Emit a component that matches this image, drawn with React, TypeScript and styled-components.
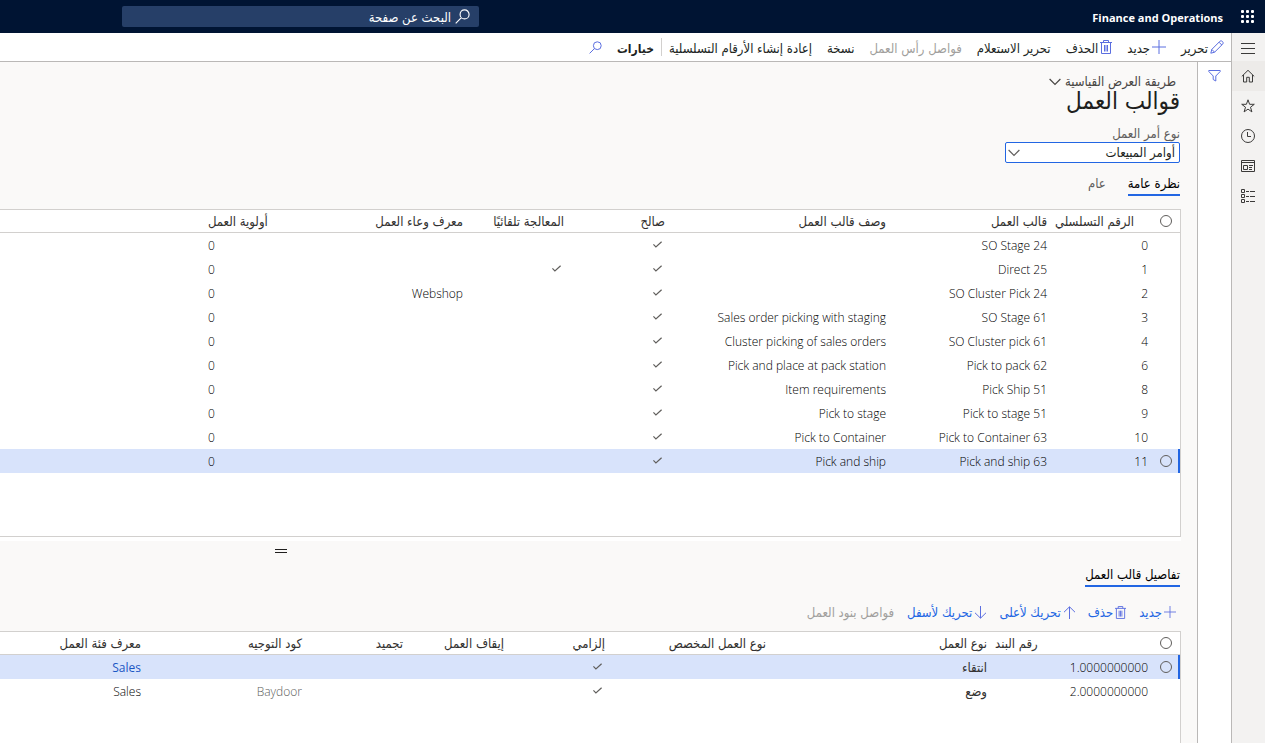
import React from 'react';
import styled, { createGlobalStyle, css } from 'styled-components';

const color = {
  navy: '#001433',
  search: '#263f68',
  blue: '#2266e3',
  icon: '#5b6ee0',
  ink: '#201f1e',
  text: '#323130',
  muted: '#605e5c',
  disabled: '#a19f9d',
  line: '#d2d0ce',
  strong: '#bab8b7',
  page: '#faf9f8',
  rail: '#f3f2f1',
  selected: '#d8e3fb',
};

const arabic = '"DejaVu Sans Condensed", "DejaVu Sans", sans-serif';
const latin = '"Open Sans", "DejaVu Sans Condensed", sans-serif';

const GlobalStyle = createGlobalStyle`
  *, *::before, *::after { box-sizing: border-box; }
  body {
    margin: 0;
    font-family: ${arabic};
    font-size: 13px;
    line-height: 20px;
    color: ${color.text};
    background: ${color.page};
  }
  button, input, select { font: inherit; color: inherit; margin: 0; }
`;

const Page = styled.div`
  min-height: 100vh;
  display: flex;
  flex-direction: column;
`;

const Header = styled.header`
  display: flex;
  align-items: center;
  height: 33px;
  padding-inline: 10px 122px;
  background: ${color.navy};
  color: #fff;
`;

const PlainButton = styled.button`
  display: flex;
  align-items: center;
  justify-content: center;
  padding: 0;
  border: 0;
  background: none;
  cursor: pointer;
`;

const Brand = styled.a`
  flex: 1;
  margin-inline-start: 17px;
  padding-top: 2px;
  font-family: ${latin};
  font-size: 11px;
  font-weight: 700;
  color: #fff;
  text-decoration: none;
`;

const SearchBox = styled.label`
  display: flex;
  align-items: center;
  gap: 4px;
  width: 357px;
  height: 21px;
  padding-inline: 9px;
  border-radius: 2px;
  background: ${color.search};
`;

const SearchInput = styled.input`
  flex: 1;
  min-width: 0;
  padding: 2px 0 0;
  border: 0;
  outline: 0;
  background: none;
  &::placeholder { color: #fff; opacity: 1; }
`;

const Body = styled.div`
  flex: 1;
  display: flex;
`;

const Rail = styled.nav`
  display: flex;
  flex-direction: column;
  width: 34px;
  border-inline-end: 1px solid ${color.strong};
  background: ${color.rail};
`;

const RailButton = styled(PlainButton)<{ $active?: boolean }>`
  height: 30px;
  padding-inline-start: 1px;
  background: ${(p) => (p.$active ? '#edebe9' : 'transparent')};
  color: #3b3a39;
  &:first-child { height: 28px; padding-top: 3px; }
`;

const Main = styled.div`
  flex: 1;
  min-width: 0;
  display: flex;
  flex-direction: column;
`;

const ActionBar = styled.div`
  display: flex;
  align-items: center;
  gap: 15px;
  height: 29px;
  padding-inline: 7px;
  border-bottom: 1px solid ${color.strong};
  background: #fff;
`;

const Action = styled.button<{ $tone?: 'blue' | 'bold' }>`
  display: flex;
  align-items: center;
  gap: 2px;
  padding: 0;
  border: 0;
  background: none;
  white-space: nowrap;
  cursor: pointer;
  color: ${(p) => (p.$tone === 'blue' ? color.blue : color.ink)};
  ${(p) => p.$tone === 'bold' && css`
    font-size: 12px;
    font-weight: 700;
  `}
  svg { color: ${color.icon}; }
  &:disabled { color: ${color.disabled}; cursor: default; }
`;

const ActionLabel = styled.span`
  padding-top: 4px;
`;

const Divider = styled.span`
  width: 1px;
  height: 18px;
  margin-inline: -8px;
  background: ${color.line};
`;

const Workspace = styled.div`
  flex: 1;
  display: flex;
`;

const FilterPane = styled.aside`
  width: 34px;
  padding-top: 8px;
  border-inline-end: 1px solid ${color.strong};
  background: #fff;
  color: ${color.icon};
`;

const FilterButton = styled(PlainButton)`
  width: 100%;
  color: inherit;
`;

const Content = styled.main`
  flex: 1;
  min-width: 0;
  display: flex;
  flex-direction: column;
  padding-inline-start: 16px;
`;

const PageHead = styled.div`
  display: flex;
  flex-direction: column;
  padding-inline-start: 1px;
`;

const ViewButton = styled.button`
  align-self: flex-start;
  display: flex;
  align-items: center;
  gap: 4px;
  margin: 10px 4px 0 0;
  padding: 0;
  border: 0;
  background: none;
  color: #484644;
`;

const Title = styled.h1`
  margin: 0;
  font-size: 24px;
  line-height: 18px;
  font-weight: 400;
  color: ${color.ink};
`;

const Field = styled.div`
  display: flex;
  flex-direction: column;
  width: 175px;
  margin-top: 16px;
`;

const FieldLabel = styled.label`
  line-height: 16px;
  color: ${color.muted};
`;

const SelectFrame = styled.div`
  position: relative;
  display: flex;
  svg {
    position: absolute;
    left: 3px;
    top: 7px;
    color: ${color.muted};
    pointer-events: none;
  }
`;

const Select = styled.select`
  appearance: none;
  width: 100%;
  height: 21px;
  padding: 0 4px;
  border: 1px solid ${color.blue};
  border-radius: 2px;
  background: #fff;
  color: ${color.ink};
`;

const Tabs = styled.div`
  display: flex;
  gap: 22px;
`;

const Tab = styled.button<{ $active?: boolean }>`
  height: 23px;
  padding: 0;
  border: 0;
  border-bottom: 2px solid transparent;
  background: none;
  white-space: nowrap;
  color: ${color.muted};
  ${(p) => p.$active && css`
    border-bottom-color: ${color.blue};
    color: #000;
  `}
`;

const ViewTabs = styled(Tabs)`
  margin-top: 10px;
`;

const DetailTabs = styled(Tabs)`
  margin-top: 3px;
  padding-inline-start: 1px;
`;

const GridPanel = styled.section<{ $fill?: boolean }>`
  margin-top: ${(p) => (p.$fill ? 9 : 13)}px;
  flex: ${(p) => (p.$fill ? '1 0 auto' : '0 0 auto')};
  min-height: ${(p) => (p.$fill ? 112 : 328)}px;
  border: solid ${color.line};
  border-width: ${(p) => (p.$fill ? '1px 1px 0 0' : '1px 1px 1px 0')};
  background: #fff;
`;

const Table = styled.table`
  width: 100%;
  table-layout: fixed;
  border-collapse: separate;
  border-spacing: 0;
`;

const HeadCell = styled.th<{ $end?: boolean }>`
  height: 23px;
  padding: 2px 4px 0;
  border-bottom: 1px solid ${color.line};
  font-weight: 400;
  line-height: 18px;
  white-space: nowrap;
  text-align: ${(p) => (p.$end ? 'left' : 'right')};
`;

const BodyRow = styled.tr<{ $selected?: boolean }>`
  background: ${(p) => (p.$selected ? color.selected : 'transparent')};
  td:first-child {
    box-shadow: ${(p) => (p.$selected ? `inset -2px 0 ${color.blue}` : 'none')};
  }
`;

const Cell = styled.td<{ $end?: boolean; $muted?: boolean }>`
  height: 24px;
  padding: 1px 4px 0;
  font-family: ${latin};
  font-size: 12px;
  font-weight: 300;
  line-height: 20px;
  white-space: nowrap;
  text-align: ${(p) => (p.$end ? 'left' : 'right')};
  color: ${(p) => (p.$muted ? color.muted : '#000')};
`;

const ArabicCell = styled(Cell)`
  font-family: ${arabic};
  font-size: 13px;
  font-weight: 400;
  color: ${color.text};
`;

const CheckCell = styled(Cell)`
  padding: 0 7px 2px;
  svg { display: block; color: ${color.muted}; }
`;

const PickCell = styled(Cell)`
  padding: 0 8px 1px 0;
`;

const PickHead = styled(HeadCell)`
  padding: 0 8px 0 0;
`;

const CellLink = styled.a`
  color: #1b56c4;
  font-weight: 400;
  text-decoration: none;
`;

const RowPicker = styled.input`
  appearance: none;
  display: block;
  width: 12px;
  height: 12px;
  border: 1px solid ${color.muted};
  border-radius: 50%;
  background: none;
`;

const Splitter = styled.div`
  display: grid;
  grid-template-columns: 893fr 12px 275fr;
  align-items: center;
  height: 24px;
  border-top: 4px solid #fff;
`;

const SplitterGrip = styled.span`
  grid-column: 2;
  height: 4px;
  border: solid ${color.ink};
  border-width: 1px 0;
`;

const DetailToolbar = styled.div`
  display: flex;
  align-items: center;
  gap: 13px;
  height: 20px;
  margin-top: 15px;
  padding-inline-start: 5px;
  ${ActionLabel} { padding-top: 2px; }
`;

type IconProps = { w?: number; h?: number; d: string; sw?: number; vb?: string };
const Icon = ({ w = 14, h = 14, d, sw = 1, vb }: IconProps) => (
  <svg width={w} height={h} viewBox={vb ?? `0 0 ${w} ${h}`} fill="none" stroke="currentColor" strokeWidth={sw} aria-hidden="true">
    <path d={d} />
  </svg>
);

const Waffle = () => (
  <svg width="15" height="15" fill="#fff" aria-hidden="true">
    {[0, 5, 10].map((y) => [0, 5, 10].map((x) => <rect key={`${x}-${y}`} x={x + 1} y={y + 1} width="3" height="3" rx="1" />))}
  </svg>
);
const Menu = () => <Icon w={14} h={11} d="M0 .5h14M0 5.5h14M0 10.5h14" />;
const Home = () => <Icon d="M.8 7.4 7 1.3l6.2 6.1M2.5 6v7h3.2V8.3h2.6V13h3.2V6" />;
const Star = () => <Icon d="M7 .8l1.6 4.5h4.7L9.5 8.2l1.4 4.7L7 10.1l-3.9 2.8 1.4-4.7L.7 5.3h4.7z" />;
const Clock = () => <Icon d="M7 .5a6.5 6.5 0 1 0 0 13a6.5 6.5 0 1 0 0-13zM6.5 3v4.5h3.5" />;
const Workspaces = () => <Icon w={14} h={12} d="M.5.5h13v11H.5zM.5 2.5h13M2.5 5.5h4v4h-4zM8 5.5h4M8 7.5h3M8 9.5h3" />;
const Modules = () => <Icon w={14} h={14} d="M.5.5h3v3h-3zM.5 5.5h3v3h-3zM.5 10.5h3v3h-3zM5 2.5h3M9 2.5h5M5 7.5h3M9 7.5h5M5 12.5h3M9 12.5h5" />;
const Funnel = () => <Icon w={13} h={12} d="M.8.5h11.4v1L7.8 6v5L5.2 9.5V6L.8 1.5z" />;
const Magnifier = ({ size = 13 }: { size?: number }) => (
  <Icon w={size} h={size} vb="0 0 13 13" d="M8.3.8a3.9 3.9 0 1 0 0 7.8a3.9 3.9 0 1 0 0-7.8zM5.5 7.5L.6 12.4" />
);
const Pencil = () => <Icon d="M.8 13.2l1-3.8L10 1.2c1.6-1.2 4 1 2.8 2.8L4.6 12.2zM9 2.2L11.8 5M1.8 9.4l2.8 2.8" />;
const Plus = ({ size = 14 }: { size?: number }) => <Icon w={size} h={size} vb="0 0 14 14" d="M7 0v14M0 7h14" />;
const Trash = ({ size = 14 }: { size?: number }) => (
  <Icon w={size - 2} h={size} vb="0 0 12 14" d="M0 2.5h12M3.5 2.5v-2h5v2M1.5 2.5v11h9v-11M4.5 5v6.5M6 5v6.5M7.5 5v6.5" />
);
const ArrowUp = () => <Icon w={12} h={13} d="M6.5 13V1M1 6.2L6.5.8 12 6.2" />;
const ArrowDown = () => <Icon w={12} h={13} d="M6.5 0v12M1 6.8l5.5 5.4L12 6.8" />;
const Chevron = () => <Icon w={12} h={8} sw={1.2} d="M.6 1L6 6.4 11.4 1" />;
const Tick = () => <Icon w={9} h={7} sw={1.2} d="M.4 3.4l2.5 2.5L8.6.8" />;

type Template = { seq: number; name: string; desc?: string; auto?: boolean; container?: string };
const templates: Template[] = [
  { seq: 0, name: 'SO Stage 24' },
  { seq: 1, name: 'Direct 25', auto: true },
  { seq: 2, name: 'SO Cluster Pick 24', container: 'Webshop' },
  { seq: 3, name: 'SO Stage 61', desc: 'Sales order picking with staging' },
  { seq: 4, name: 'SO Cluster pick 61', desc: 'Cluster picking of sales orders' },
  { seq: 6, name: 'Pick to pack 62', desc: 'Pick and place at pack station' },
  { seq: 8, name: 'Pick Ship 51', desc: 'Item requirements' },
  { seq: 9, name: 'Pick to stage 51', desc: 'Pick to stage' },
  { seq: 10, name: 'Pick to Container 63', desc: 'Pick to Container' },
  { seq: 11, name: 'Pick and ship 63', desc: 'Pick and ship' },
];
const lines = [
  { no: '1.0000000000', type: 'انتقاء', directive: '' },
  { no: '2.0000000000', type: 'وضع', directive: 'Baydoor' },
];

const Columns = ({ widths }: { widths: number[] }) => (
  <colgroup>
    {widths.map((w, i) => <col key={i} width={w} />)}
    <col />
  </colgroup>
);

const TemplatesGrid = () => (
  <GridPanel>
    <Table>
      <Columns widths={[28, 101, 161, 221, 101, 101, 161, 102]} />
      <thead>
        <tr>
          <PickHead><RowPicker type="checkbox" aria-label="تحديد الكل" /></PickHead>
          <HeadCell $end>الرقم التسلسلي</HeadCell>
          <HeadCell>قالب العمل</HeadCell>
          <HeadCell>وصف قالب العمل</HeadCell>
          <HeadCell>صالح</HeadCell>
          <HeadCell>المعالجة تلقائيًا</HeadCell>
          <HeadCell>معرف وعاء العمل</HeadCell>
          <HeadCell $end>أولوية العمل</HeadCell>
          <HeadCell />
        </tr>
      </thead>
      <tbody>
        {templates.map((t) => (
          <BodyRow key={t.seq} $selected={t.seq === 11}>
            <PickCell>{t.seq === 11 && <RowPicker type="checkbox" aria-label={t.name} />}</PickCell>
            <Cell>{t.seq}</Cell>
            <Cell>{t.name}</Cell>
            <Cell>{t.desc}</Cell>
            <CheckCell><Tick /></CheckCell>
            <CheckCell>{t.auto && <Tick />}</CheckCell>
            <Cell>{t.container}</Cell>
            <Cell $end>0</Cell>
            <Cell />
          </BodyRow>
        ))}
      </tbody>
    </Table>
  </GridPanel>
);

const LinesGrid = () => (
  <GridPanel $fill>
    <Table>
      <Columns widths={[28, 161, 221, 161, 101, 101, 101, 161]} />
      <thead>
        <tr>
          <PickHead><RowPicker type="checkbox" aria-label="تحديد الكل" /></PickHead>
          <HeadCell $end>رقم البند</HeadCell>
          <HeadCell>نوع العمل</HeadCell>
          <HeadCell>نوع العمل المخصص</HeadCell>
          <HeadCell>إلزامي</HeadCell>
          <HeadCell>إيقاف العمل</HeadCell>
          <HeadCell>تجميد</HeadCell>
          <HeadCell>كود التوجيه</HeadCell>
          <HeadCell>معرف فئة العمل</HeadCell>
        </tr>
      </thead>
      <tbody>
        {lines.map((l, i) => (
          <BodyRow key={l.no} $selected={i === 0}>
            <PickCell>{i === 0 && <RowPicker type="checkbox" aria-label={l.no} />}</PickCell>
            <Cell>{l.no}</Cell>
            <ArabicCell>{l.type}</ArabicCell>
            <Cell />
            <CheckCell><Tick /></CheckCell>
            <Cell />
            <Cell />
            <Cell $muted>{l.directive}</Cell>
            <Cell>{i === 0 ? <CellLink href="#sales">Sales</CellLink> : 'Sales'}</Cell>
          </BodyRow>
        ))}
      </tbody>
    </Table>
  </GridPanel>
);

export default function App() {
  return (
    <Page dir="rtl" lang="ar">
      <GlobalStyle />
      <Header>
        <PlainButton aria-label="مشغل التطبيقات"><Waffle /></PlainButton>
        <Brand href="#home"><bdi>Finance and Operations</bdi></Brand>
        <SearchBox>
          <Magnifier size={15} />
          <SearchInput type="text" placeholder="البحث عن صفحة" aria-label="البحث عن صفحة" />
        </SearchBox>
      </Header>
      <Body>
        <Rail>
          <RailButton aria-label="القائمة"><Menu /></RailButton>
          <RailButton aria-label="الصفحة الرئيسية" $active><Home /></RailButton>
          <RailButton aria-label="المفضلة"><Star /></RailButton>
          <RailButton aria-label="الأخيرة"><Clock /></RailButton>
          <RailButton aria-label="مساحات العمل"><Workspaces /></RailButton>
          <RailButton aria-label="الوحدات"><Modules /></RailButton>
        </Rail>
        <Main>
          <ActionBar>
            <Action><Pencil /><ActionLabel>تحرير</ActionLabel></Action>
            <Action><Plus /><ActionLabel>جديد</ActionLabel></Action>
            <Action><Trash /><ActionLabel>الحذف</ActionLabel></Action>
            <Action><ActionLabel>تحرير الاستعلام</ActionLabel></Action>
            <Action disabled><ActionLabel>فواصل رأس العمل</ActionLabel></Action>
            <Action><ActionLabel>نسخة</ActionLabel></Action>
            <Action><ActionLabel>إعادة إنشاء الأرقام التسلسلية</ActionLabel></Action>
            <Divider />
            <Action $tone="bold"><ActionLabel>خيارات</ActionLabel></Action>
            <Action aria-label="بحث"><Magnifier /></Action>
          </ActionBar>
          <Workspace>
            <FilterPane>
              <FilterButton aria-label="عوامل التصفية"><Funnel /></FilterButton>
            </FilterPane>
            <Content>
              <PageHead>
                <ViewButton>طريقة العرض القياسية<Chevron /></ViewButton>
                <Title>قوالب العمل</Title>
                <Field>
                  <FieldLabel htmlFor="order-type">نوع أمر العمل</FieldLabel>
                  <SelectFrame>
                    <Select id="order-type" defaultValue="sales">
                      <option value="sales">أوامر المبيعات</option>
                    </Select>
                    <Chevron />
                  </SelectFrame>
                </Field>
                <ViewTabs>
                  <Tab $active>نظرة عامة</Tab>
                  <Tab>عام</Tab>
                </ViewTabs>
              </PageHead>
              <TemplatesGrid />
              <Splitter><SplitterGrip /></Splitter>
              <DetailTabs><Tab $active>تفاصيل قالب العمل</Tab></DetailTabs>
              <DetailToolbar>
                <Action $tone="blue"><Plus size={12} /><ActionLabel>جديد</ActionLabel></Action>
                <Action $tone="blue"><Trash size={13} /><ActionLabel>حذف</ActionLabel></Action>
                <Action $tone="blue"><ArrowUp /><ActionLabel>تحريك لأعلى</ActionLabel></Action>
                <Action $tone="blue"><ArrowDown /><ActionLabel>تحريك لأسفل</ActionLabel></Action>
                <Action disabled><ActionLabel>فواصل بنود العمل</ActionLabel></Action>
              </DetailToolbar>
              <LinesGrid />
            </Content>
          </Workspace>
        </Main>
      </Body>
    </Page>
  );
}
